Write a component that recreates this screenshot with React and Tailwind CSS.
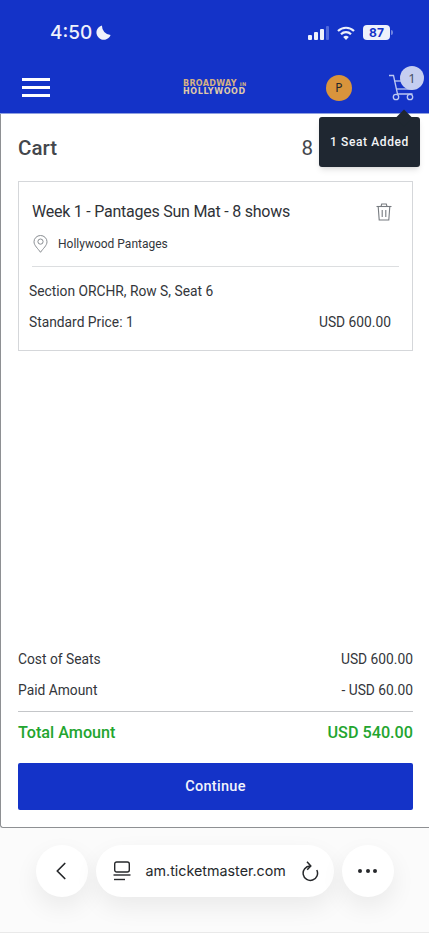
import { ChevronLeft } from "lucide-react"

function StatusBar() {
    return (
        <div className="flex items-center justify-between h-[64px] pl-[50px] pr-[36px] pt-[1px]">
            <div className="flex items-center gap-[4px]">
                <span className="font-['Inter',sans-serif] text-[19px] font-medium text-[#eef1fb] leading-none">4:50</span>
                <svg width="15" height="15" viewBox="0 0 15 15">
                    <path d="M6 0.4A7.3 7.3 0 1 0 14.6 10A9 9 0 0 1 6 0.4Z" fill="#eef1fb" />
                </svg>
            </div>
            <div className="flex items-center">
                <svg width="21" height="14" viewBox="0 0 21 14">
                    <rect x="0" y="9" width="4" height="5" rx="1" fill="#eef1fb" />
                    <rect x="6" y="6" width="4" height="8" rx="1" fill="#eef1fb" />
                    <rect x="12" y="3" width="4" height="11" rx="1" fill="#eef1fb" />
                    <rect x="18" y="0" width="3" height="14" rx="1" fill="#5069dc" />
                </svg>
                <svg className="ml-[8px]" width="18" height="14" viewBox="0 0 18 14" fill="none" stroke="#eef1fb" strokeWidth="2.2">
                    <path d="M1 5A11.5 11.5 0 0 1 17 5" />
                    <path d="M4 8.2A7 7 0 0 1 14 8.2" />
                    <path d="M9 14L6.2 11A4 4 0 0 1 11.8 11Z" fill="#eef1fb" stroke="none" />
                </svg>
                <div className="ml-[8px] flex items-center">
                    <div className="w-[27px] h-[15px] rounded-[4px] bg-[#eef1fb] flex items-center justify-center">
                        <span className="font-['Inter',sans-serif] text-[12px] font-bold text-[#1433c8] leading-none">87</span>
                    </div>
                    <div className="w-[2px] h-[5px] ml-[1px] rounded-r-full bg-[#6f84e0]"></div>
                </div>
            </div>
        </div>
    )
}

function CartIcon() {
    return (
        <svg width="26" height="27" viewBox="0 0 26 27" fill="none" stroke="#bcc8f2" strokeWidth="1.3">
            <path d="M1 1.5H5.5L9.5 20H24.5" />
            <path d="M6.5 7H24" />
            <path d="M8 15H24.5" />
            <circle cx="8" cy="23" r="2.7" />
            <circle cx="22" cy="23" r="2.7" />
        </svg>
    )
}

function NavBar() {
    return (
        <div className="flex items-center h-[50px] pl-[22px] pb-[3px]">
            <div className="flex flex-col gap-[5px] w-[28px]">
                <div className="h-[3px] bg-white"></div>
                <div className="h-[3px] bg-white"></div>
                <div className="h-[3px] bg-white"></div>
            </div>
            <div className="ml-[133px] flex flex-col items-start w-[66px] font-['DejaVu_Sans',sans-serif] font-bold text-[8px] leading-[8px] text-[#d4b084]">
                <span className="tracking-[0.3px] whitespace-nowrap">BROADWAY <span className="text-[5px]">IN</span></span>
                <span className="tracking-[0.6px] text-[#dfc9a8]">HOLLYWOOD</span>
            </div>
            <div className="ml-[77px] w-[26px] h-[26px] rounded-full bg-[#d9943c] flex items-center justify-center">
                <span className="font-['Noto_Sans',sans-serif] text-[12px] text-[#22252c] leading-none">P</span>
            </div>
            <div className="relative ml-[36px]">
                <CartIcon />
                <div className="absolute -top-[8px] left-[12px] w-[24px] h-[24px] rounded-full bg-[#c5cef0] flex items-center justify-center">
                    <span className="font-['Noto_Sans',sans-serif] text-[13px] text-[#4a5068] leading-none">1</span>
                </div>
            </div>
        </div>
    )
}

function Toast() {
    return (
        <div className="absolute top-[117px] left-[319px] w-[101px] h-[50px] rounded-[3px] bg-[#1f2731] shadow-md flex items-center justify-center">
            <div className="absolute -top-[5px] left-[79px] w-[12px] h-[12px] rotate-45 bg-[#1f2731]"></div>
            <span className="relative text-[12px] font-medium tracking-[0.6px] text-[#f2f3f5]">1 Seat Added</span>
        </div>
    )
}

function TicketCard() {
    return (
        <div className="mt-[19px] ml-[17px] mr-[16px] h-[170px] border border-[#d5d7da] pt-[19px] px-[10px]">
            <div className="flex items-center justify-between pl-[3px] pr-[10px]">
                <h3 className="text-[16px] tracking-[-0.24px] leading-[22px] text-[#2f3237]">Week 1 - Pantages Sun Mat - 8 shows</h3>
                <svg width="16" height="18" viewBox="0 0 16 18" fill="none" stroke="#777b80" strokeWidth="1.1">
                    <path d="M0.5 3.5H15.5" />
                    <path d="M5 3.5L5.7 1H10.3L11 3.5" />
                    <path d="M2.2 3.5L3.2 17H12.8L13.8 3.5" />
                    <path d="M6.2 7V14M9.8 7V14" />
                </svg>
            </div>
            <div className="flex items-center gap-[10px] mt-[12px] pl-[4px]">
                <svg width="15" height="18" viewBox="0 0 15 18" fill="none" stroke="#8a8e93" strokeWidth="1">
                    <path d="M7.5 17.3C5 13.6 1 10.5 1 6.8A6.5 6.3 0 0 1 14 6.8C14 10.5 10 13.6 7.5 17.3Z" />
                    <circle cx="7.5" cy="6.6" r="2.6" />
                </svg>
                <span className="text-[12px] leading-[18px] text-[#33363b]">Hollywood Pantages</span>
            </div>
            <div className="h-px bg-[#dcdee0] mt-[13px] ml-[3px] mr-[3px]"></div>
            <p className="text-[13.8px] leading-[20px] text-[#33363b] mt-[14px]">Section ORCHR, Row S, Seat 6</p>
            <div className="flex items-center justify-between text-[13.8px] leading-[20px] text-[#33363b] mt-[11px] pr-[11px]">
                <span>Standard Price: 1</span>
                <span>USD 600.00</span>
            </div>
        </div>
    )
}

function Summary() {
    return (
        <div className="pl-[17px] pr-[16px] mt-auto mb-[17px]">
            <div className="flex justify-between text-[13.8px] leading-[20px] text-[#33363b]">
                <span>Cost of Seats</span>
                <span>USD 600.00</span>
            </div>
            <div className="flex justify-between text-[13.8px] leading-[20px] text-[#33363b] mt-[11px]">
                <span>Paid Amount</span>
                <span>- USD 60.00</span>
            </div>
            <div className="h-px bg-[#c4c6c9] mt-[11px]"></div>
            <div className="flex justify-between text-[16.2px] leading-[22px] font-medium text-[#23a52f] mt-[10px]">
                <span>Total Amount</span>
                <span>USD 540.00</span>
            </div>
            <button className="w-full h-[47px] mt-[19px] rounded-[2px] bg-[#1433c8] text-[14.5px] font-medium tracking-[0.3px] text-[#f2f4fc]">
                Continue
            </button>
        </div>
    )
}

function BrowserBar() {
    return (
        <div className="flex-1 bg-[#fbfbfb] flex justify-center gap-[8px] pt-[17px] border-b border-[#e9e9e9] font-['Inter',sans-serif]">
            <div className="w-[52px] h-[52px] rounded-full bg-white shadow-[0_10px_24px_rgba(0,0,0,0.07)] flex items-center justify-center pr-[2px]">
                <ChevronLeft size={30} strokeWidth={1.4} color="#26282b" />
            </div>
            <div className="w-[238px] h-[52px] rounded-full bg-white shadow-[0_10px_24px_rgba(0,0,0,0.07)] flex items-center pl-[17px]">
                <svg width="18" height="20" viewBox="0 0 18 20" fill="none" stroke="#26282b" strokeWidth="1.4">
                    <rect x="1.7" y="1" width="14.6" height="10" rx="2" />
                    <path d="M0.5 14H17.5" />
                    <path d="M1 18.5H12" />
                </svg>
                <span className="ml-[15px] text-[14.3px] text-[#26282b]">am.ticketmaster.com</span>
                <svg className="ml-[15px]" width="18" height="21" viewBox="0 0 18 21" fill="none" stroke="#26282b" strokeWidth="1.5">
                    <path d="M15.8 9A7.2 7.2 0 1 1 9 5" />
                    <path d="M6 0.8L9.8 5L6.2 8.8" />
                </svg>
            </div>
            <div className="w-[52px] h-[52px] rounded-full bg-white shadow-[0_10px_24px_rgba(0,0,0,0.07)] flex items-center justify-center gap-[3.5px]">
                <div className="w-[4px] h-[4px] rounded-full bg-[#26282b]"></div>
                <div className="w-[4px] h-[4px] rounded-full bg-[#26282b]"></div>
                <div className="w-[4px] h-[4px] rounded-full bg-[#26282b]"></div>
            </div>
        </div>
    )
}

export default function App() {
    return (
        <div className="relative w-[429px] h-[933px] flex flex-col overflow-hidden bg-white font-['Roboto',sans-serif]">
            <div className="h-[114px] bg-[#1433c8] border-b border-[#8fa0e0]">
                <StatusBar />
                <NavBar />
            </div>
            <div className="h-[714px] flex flex-col border-l border-b border-[#8e9093] rounded-bl-[3px]">
                <div className="flex items-center justify-between pl-[17px] mt-[20px] pr-[116px] h-[28px]">
                    <h2 className="text-[20.5px] font-medium text-[#44474c]">Cart</h2>
                    <span className="text-[20.5px] text-[#44474c]">8</span>
                </div>
                <TicketCard />
                <Summary />
            </div>
            <BrowserBar />
            <Toast />
        </div>
    )
}
